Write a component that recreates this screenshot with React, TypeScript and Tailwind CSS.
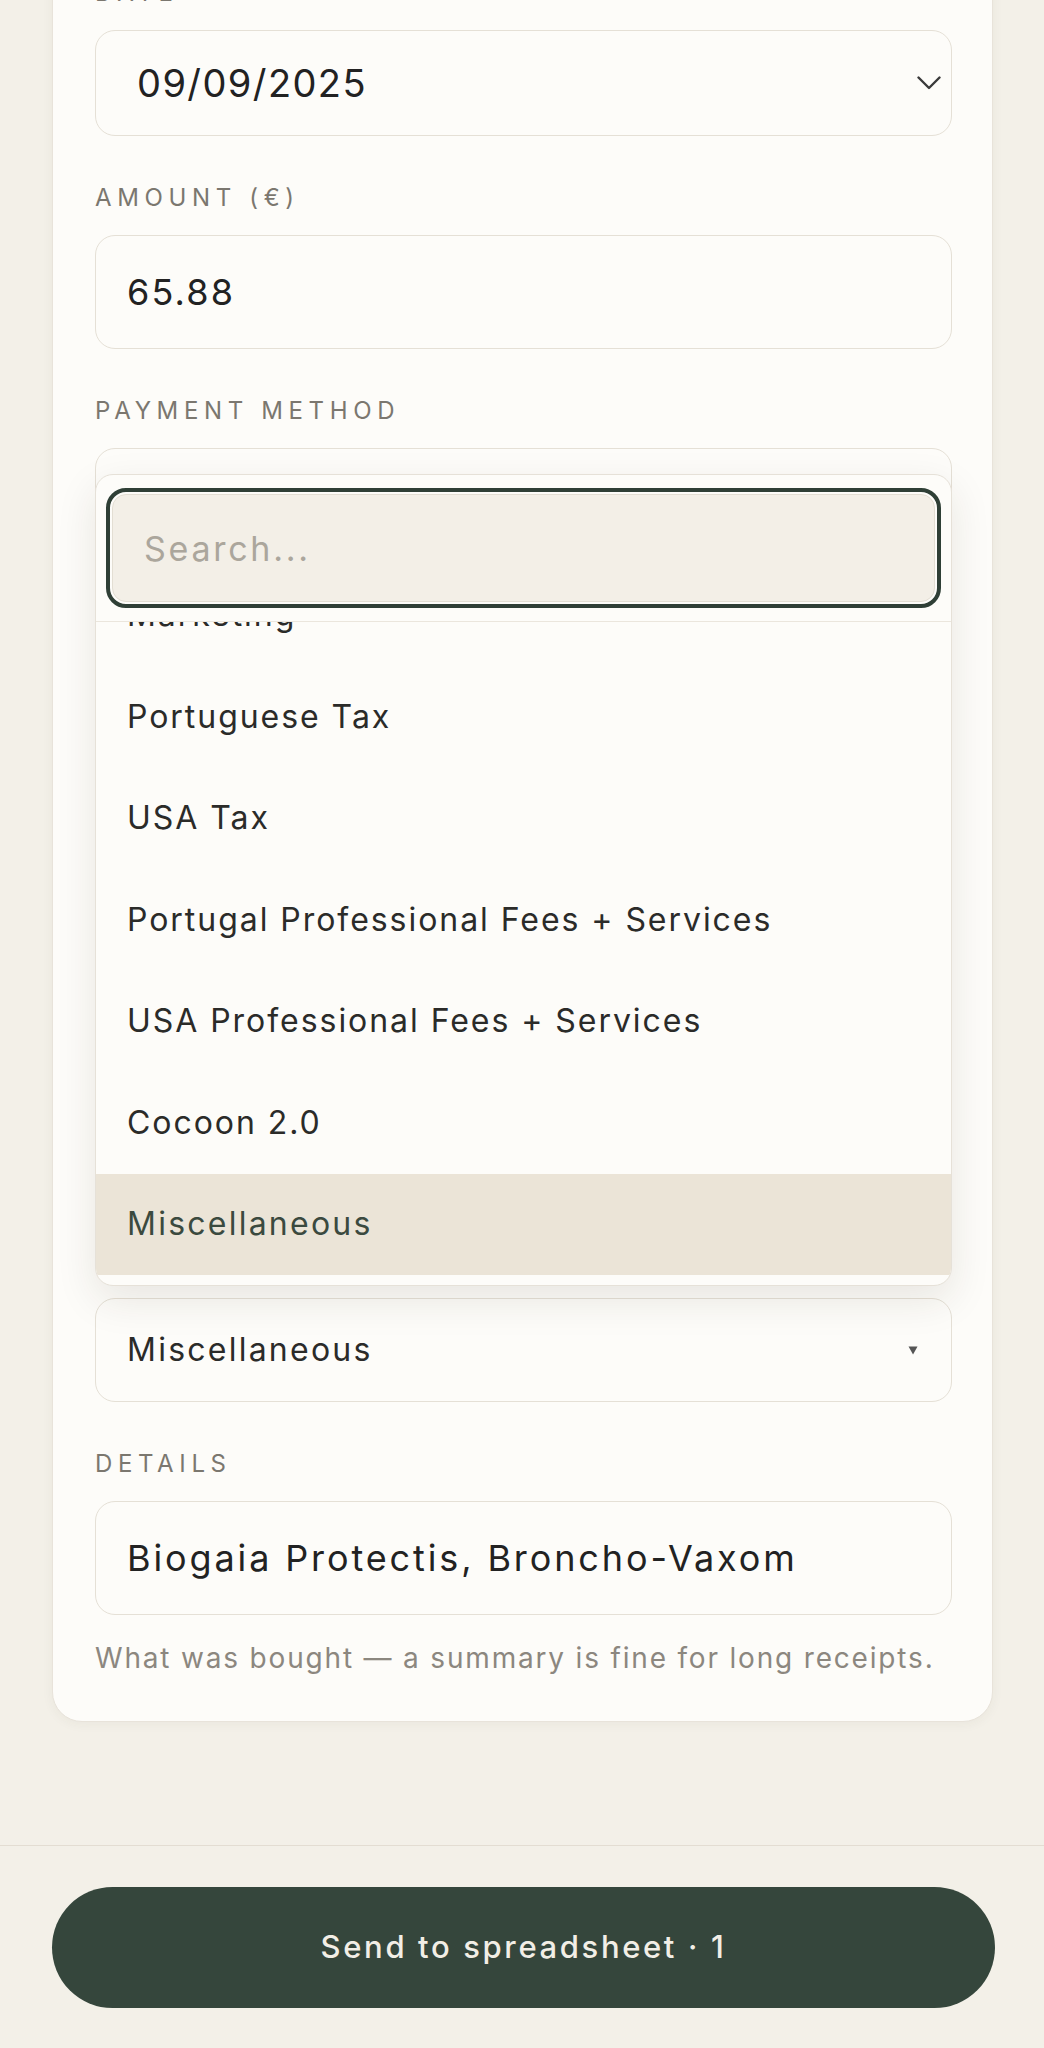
import { useState } from "react";

const categories = [
  "Marketing",
  "Portuguese Tax",
  "USA Tax",
  "Portugal Professional Fees + Services",
  "USA Professional Fees + Services",
  "Cocoon 2.0",
  "Miscellaneous",
];

function Label({ children }: { children: React.ReactNode }) {
  return (
    <div className="mb-[22px] h-[30px] text-[24px] leading-[30px] tracking-[0.235em] uppercase text-[#7b776f]">
      {children}
    </div>
  );
}

export default function App() {
  const [selected] = useState("Miscellaneous");

  return (
    <div
      className="min-h-screen flex flex-col bg-[#f3f0e8] text-[#2a2a28]"
      style={{ fontFamily: '"Inter", "Noto Sans", sans-serif' }}
    >
      <main className="pl-[52px] pr-[51px]">
        <section className="-mt-[63px] rounded-[30px] border border-[#e8e3da] bg-[#fdfcf9] pl-[42px] pr-[40px] pt-[40px] pb-[46px] shadow-[0_2px_12px_rgba(60,50,30,0.05)]">
          <div className="flex flex-col gap-[47px]">
            <div>
              <Label>Date</Label>
              <div className="flex h-[106px] items-center justify-between rounded-[20px] border border-[#e5e0d6] bg-[#fdfcf9] pl-[41px] pr-[10px]">
                <span className="text-[38px] tracking-[0.037em] text-[#222]">09/09/2025</span>
                <svg width="24" height="14" viewBox="0 0 24 14" fill="none">
                  <path d="M1.5 1.5 12 12 22.5 1.5" stroke="#3a3a3a" strokeWidth="2.4" strokeLinecap="round" strokeLinejoin="round" />
                </svg>
              </div>
            </div>

            <div>
              <Label>Amount (€)</Label>
              <input
                readOnly
                value="65.88"
                className="h-[114px] w-full rounded-[20px] border border-[#e5e0d6] bg-[#fdfcf9] px-[31px] text-[36px] tracking-[0.06em] text-[#222] outline-none"
              />
            </div>

            <div>
              <Label>Payment method</Label>
              <div className="h-[104px] rounded-[20px] border border-[#e5e0d6] bg-[#fdfcf9]" />
            </div>
          </div>

          <div className="relative mt-[746px]">
            {/* open category menu */}
            <div className="absolute left-0 right-0 bottom-[calc(100%+12px)] flex h-[812px] flex-col overflow-hidden rounded-[18px] border border-[#e6e1d8] bg-[#fdfcf9] shadow-[0_14px_40px_rgba(50,40,20,0.10)]">
              <div className="shrink-0 border-b border-[#ebe6dd] px-[16px] py-[19px]">
                <input
                  placeholder="Search..."
                  className="h-[108px] w-full rounded-[14px] border border-[#e3ded3] bg-[#f3efe7] px-[31px] text-[34px] tracking-[0.08em] placeholder:text-[#aba69c] outline-4 outline-solid outline-offset-2 outline-[#2f3f36]"
                />
              </div>
              <div className="flex flex-1 flex-col justify-end overflow-hidden pb-[10px]">
                {categories.map((c) => (
                  <div
                    key={c}
                    className={
                      c === selected
                        ? "flex h-[101.5px] shrink-0 items-center bg-[#ebe4d7] px-[31px] text-[32px] tracking-[0.07em] text-[#3b4a3f]"
                        : "flex h-[101.5px] shrink-0 items-center px-[31px] text-[32px] tracking-[0.061em] text-[#2b2b29]"
                    }
                  >
                    {c}
                  </div>
                ))}
              </div>
            </div>

            <div className="flex h-[104px] items-center justify-between rounded-[20px] border border-[#e5e0d6] bg-[#fdfcf9] pl-[31px] pr-[33px]">
              <span className="text-[32px] tracking-[0.07em] text-[#2b2b29]">{selected}</span>
              <svg width="10" height="9" viewBox="0 0 10 9">
                <path d="M0.5 0.5h9L5 8.5z" fill="#555" />
              </svg>
            </div>
          </div>

          <div className="mt-[47px]">
            <Label>Details</Label>
            <input
              readOnly
              value="Biogaia Protectis, Broncho-Vaxom"
              className="h-[114px] w-full rounded-[20px] border border-[#e5e0d6] bg-[#fdfcf9] px-[31px] text-[36px] tracking-[0.08em] text-[#222] outline-none"
            />
            <p className="mt-[26px] h-[34px] text-[28px] leading-[34px] tracking-[0.065em] text-[#8c877f]">
              What was bought — a summary is fine for long receipts.
            </p>
          </div>
        </section>
      </main>

      <footer className="mt-auto border-t border-[#e3ddd2] pl-[52px] pr-[49px] pt-[41px] pb-[40px]">
        <button className="h-[121px] w-full rounded-full bg-[#35463c] text-[31px] font-medium tracking-[0.085em] text-[#f2eee6]">
          Send to spreadsheet · 1
        </button>
      </footer>
    </div>
  );
}
